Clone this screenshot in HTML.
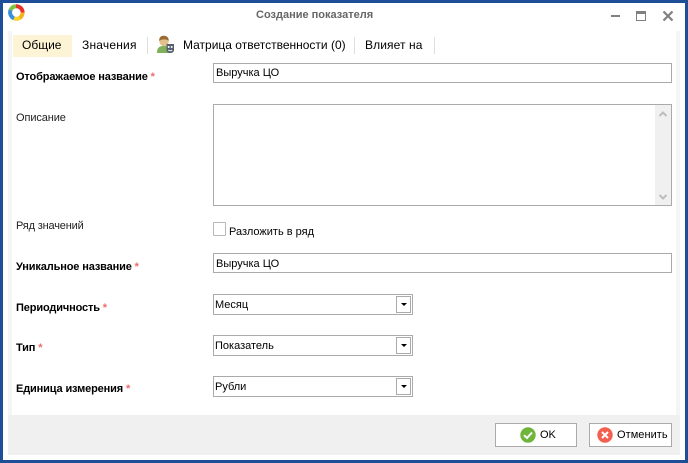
<!DOCTYPE html>
<html lang="ru"><head><meta charset="utf-8"><title>Создание показателя</title>
<style>
html,body{margin:0;padding:0;background:#fff}
#w{position:relative;width:688px;height:463px;overflow:hidden;background:#fff;font-family:"Liberation Sans",sans-serif;font-size:11px;color:#000}
#w div,#w svg{position:absolute}
.t{white-space:nowrap;line-height:14px}
.b{font-weight:bold;letter-spacing:-.14px}
.r{color:#f06a6a;font-weight:bold}
.i{box-sizing:border-box;border:1px solid #aaa;background:#fff}
.s{box-sizing:border-box;border:1px solid #aaa;background:#fff}
.a{box-sizing:border-box;width:15px;height:17px;left:396px;border:1px solid #aaa;background:#fff}
.sep{width:1px;height:17px;top:37px;background:#dfdfdf}
</style></head><body><div id="w">
<div style="left:0;top:0;width:688px;height:3px;background:#1f4e99"></div>
<div style="left:0;top:0;width:3px;height:463px;background:#1f4e99"></div>
<div style="left:685px;top:0;width:3px;height:463px;background:#1f4e99"></div>
<div style="left:0;top:460px;width:688px;height:3px;background:#1f4e99"></div>
<div style="left:8px;top:31px;width:4px;height:384px;background:#f5f5f5"></div>
<div style="left:676px;top:31px;width:4px;height:384px;background:#f5f5f5"></div>
<div style="left:8px;top:415px;width:672px;height:40px;background:#f0f0f0"></div>

<svg style="left:8px;top:4px" width="17" height="17" viewBox="0 0 17 17" fill="none" stroke-width="4">
<path d="M2.6 6A6.3 6.3 0 0 1 8 2.2" stroke="#7fc241"/><path d="M8 2.2A6.3 6.3 0 0 1 14.6 8.5" stroke="#e5332a"/>
<path d="M14.6 8.5A6.3 6.3 0 0 1 11.5 14" stroke="#f7b21b"/><path d="M11.5 14A6.3 6.3 0 0 1 6 14.3" stroke="#f9d423"/>
<path d="M6 14.3A6.3 6.3 0 0 1 2.6 6" stroke="#3b8fd9"/></svg>
<div class="t" style="left:256px;top:8px;color:#666;font-weight:bold">Создание показателя</div>
<div style="left:611px;top:15px;width:9px;height:2px;background:#808080"></div>
<div style="box-sizing:border-box;left:636px;top:11px;width:10px;height:10px;border:1px solid #808080;border-top-width:3px"></div>
<svg style="left:662px;top:10px" width="12" height="12" viewBox="0 0 12 12"><path d="M1.5 1.5L10.5 10.5M10.5 1.5L1.5 10.5" stroke="#808080" stroke-width="2.2"/></svg>

<div style="left:13px;top:35px;width:59px;height:22px;background:#fdf3d5"></div>
<div class="t" style="left:22px;top:38px;font-size:12px">Общие</div>
<div class="t" style="left:82px;top:38px;font-size:12px;letter-spacing:.2px">Значения</div>
<div class="sep" style="left:147px"></div>
<svg style="left:156px;top:35px" width="19" height="19" viewBox="0 0 19 19">
<path d="M1 18C1 12 4 11 8 11C12 11 15 12 15 18Z" fill="#7fb05a"/>
<circle cx="8" cy="6.5" r="4.6" fill="#e3c08c"/><path d="M3.2 6C3 2 5 .8 8 .8C11 .8 13 3 12.8 6C10.5 3.8 6 3.8 3.2 6Z" fill="#9b6b35"/>
<path d="M10.5 9H18V15C18 17 16 18 14.2 18C12.4 18 10.5 17 10.5 15Z" fill="#555f6e"/>
<circle cx="12.7" cy="12" r="1" fill="#fff"/><circle cx="15.7" cy="12" r="1" fill="#fff"/><path d="M12.2 15Q14.2 16.5 16.2 15" stroke="#fff" fill="none"/></svg>
<div class="t" style="left:183px;top:38px;font-size:12px">Матрица ответственности (0)</div>
<div class="sep" style="left:354px"></div>
<div class="t" style="left:365px;top:38px;font-size:12px;letter-spacing:.1px">Влияет на</div>
<div class="sep" style="left:434px"></div>

<div class="t b" style="left:16px;top:70px">Отображаемое название <span class="r">*</span></div>
<div class="i" style="left:213px;top:63px;width:459px;height:20px"></div>
<div class="t" style="left:216px;top:66px">Выручка ЦО</div>

<div class="t" style="left:16px;top:111px;color:#222;letter-spacing:-.1px">Описание</div>
<div class="i" style="left:213px;top:104px;width:459px;height:102px"></div>
<div style="left:655px;top:105px;width:16px;height:100px;background:#f0f0f0"></div>
<svg style="left:658px;top:110px" width="10" height="8" viewBox="0 0 10 8"><path d="M1.5 6L5 2.5L8.5 6" fill="none" stroke="#bdbdbd" stroke-width="2"/></svg>
<svg style="left:658px;top:193px" width="10" height="8" viewBox="0 0 10 8"><path d="M1.5 2L5 5.5L8.5 2" fill="none" stroke="#bdbdbd" stroke-width="2"/></svg>

<div class="t" style="left:16px;top:219px;color:#222;letter-spacing:-.17px">Ряд значений</div>
<div style="box-sizing:border-box;left:213px;top:222px;width:13px;height:14px;border:1px solid #b8b8b8;border-radius:1px;background:#fff"></div>
<div class="t" style="left:229px;top:225px">Разложить в ряд</div>

<div class="t b" style="left:16px;top:260px">Уникальное название <span class="r">*</span></div>
<div class="i" style="left:213px;top:253px;width:459px;height:20px"></div>
<div class="t" style="left:216px;top:257px">Выручка ЦО</div>

<div class="t b" style="left:16px;top:301px">Периодичность <span class="r">*</span></div>
<div class="s" style="left:213px;top:294px;width:200px;height:21px"></div>
<div class="t" style="left:215px;top:298px">Месяц</div>
<div class="a" style="top:296px"></div>
<svg style="left:400px;top:302px" width="8" height="5"><path d="M1 1H7L4 4Z" fill="#000"/></svg>

<div class="t b" style="left:16px;top:341px">Тип <span class="r">*</span></div>
<div class="s" style="left:213px;top:335px;width:200px;height:21px"></div>
<div class="t" style="left:215px;top:339px">Показатель</div>
<div class="a" style="top:337px"></div>
<svg style="left:400px;top:343px" width="8" height="5"><path d="M1 1H7L4 4Z" fill="#000"/></svg>

<div class="t b" style="left:16px;top:382px">Единица измерения <span class="r">*</span></div>
<div class="s" style="left:213px;top:376px;width:200px;height:21px"></div>
<div class="t" style="left:215px;top:380px">Рубли</div>
<div class="a" style="top:378px"></div>
<svg style="left:400px;top:384px" width="8" height="5"><path d="M1 1H7L4 4Z" fill="#000"/></svg>

<div class="i" style="left:495px;top:423px;width:82px;height:24px"></div>
<svg style="left:520px;top:427px" width="16" height="16" viewBox="0 0 16 16"><circle cx="8" cy="8" r="7.7" fill="#6fb53b"/><path d="M4 8.2L7 11L12 5.5" fill="none" stroke="#fff" stroke-width="2"/></svg>
<div class="t" style="left:540px;top:428px">OK</div>

<div class="i" style="left:589px;top:423px;width:83px;height:24px"></div>
<svg style="left:597px;top:427px" width="16" height="16" viewBox="0 0 16 16"><circle cx="8" cy="8" r="7.7" fill="#f4604f"/><path d="M5 5L11 11M11 5L5 11" fill="none" stroke="#fff" stroke-width="2"/></svg>
<div class="t" style="left:617px;top:428px;letter-spacing:.05px">Отменить</div>
</div></body></html>
